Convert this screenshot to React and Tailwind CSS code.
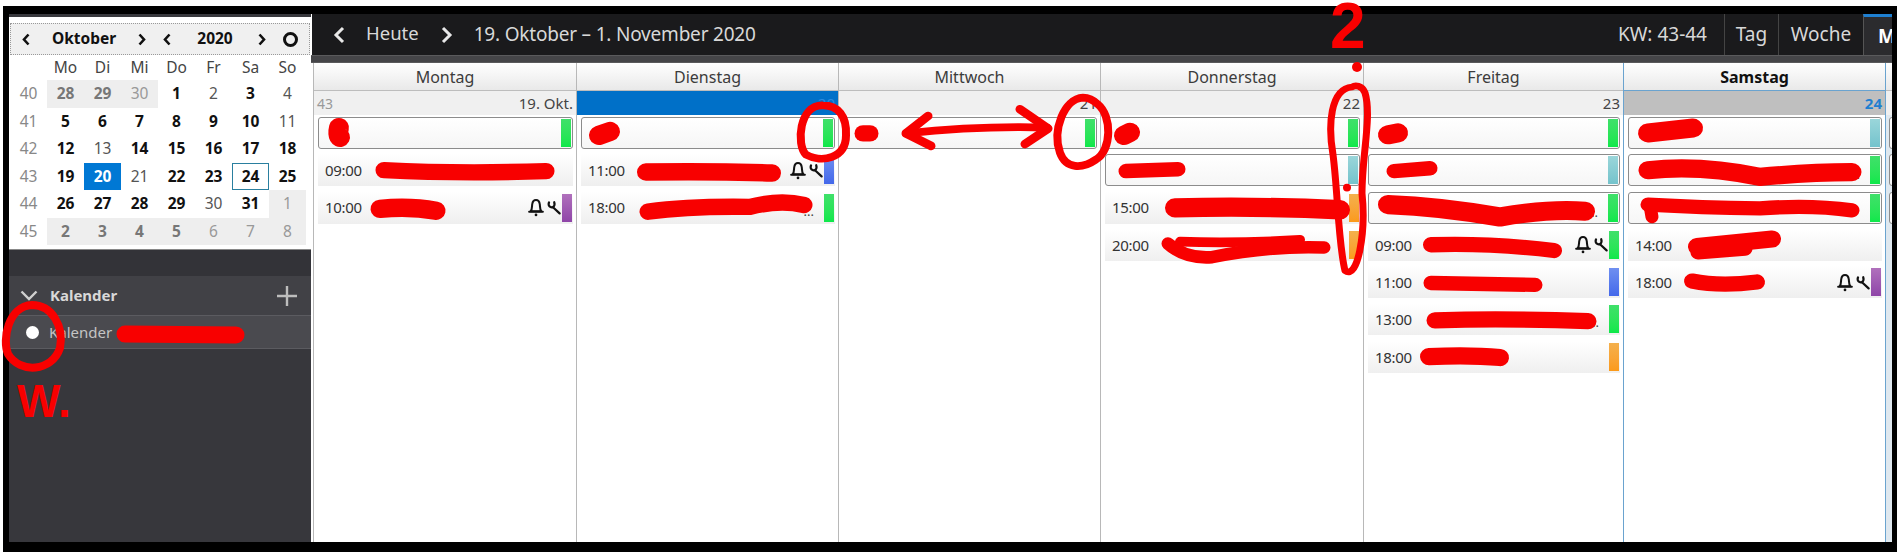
import React from "react";

const weeks = [
  [40, [["28",1,1],["29",1,1],["30",0,1],["1",1,0],["2",0,0],["3",1,0],["4",0,0]]],
  [41, [["5",1,0],["6",1,0],["7",1,0],["8",1,0],["9",1,0],["10",1,0],["11",0,0]]],
  [42, [["12",1,0],["13",0,0],["14",1,0],["15",1,0],["16",1,0],["17",1,0],["18",1,0]]],
  [43, [["19",1,0],["20",1,0],["21",0,0],["22",1,0],["23",1,0],["24",1,0],["25",1,0]]],
  [44, [["26",1,0],["27",1,0],["28",1,0],["29",1,0],["30",0,0],["31",1,0],["1",0,1]]],
  [45, [["2",1,1],["3",1,1],["4",1,1],["5",1,1],["6",0,1],["7",0,1],["8",0,1]]],
];

function Bell() {
  return (
    <svg width="16" height="19" viewBox="0 0 15 18" fill="none" stroke="#111" strokeWidth="1.9">
      <path d="M2.5 12.5 C4 10.5 3.6 8 3.9 6 C4.3 3.2 5.8 2 7.5 2 C9.2 2 10.7 3.2 11.1 6 C11.4 8 11 10.5 12.5 12.5 Z" strokeLinejoin="round" />
      <path d="M1 13 H14" strokeLinecap="round" />
      <circle cx="7.5" cy="16" r="1.3" fill="#111" stroke="none" />
    </svg>
  );
}

function Wrench() {
  return (
    <svg width="14" height="15" viewBox="0 0 14 15" fill="none" stroke="#111" strokeLinecap="round" strokeLinejoin="round">
      <path d="M2 2.5 C0.8 5.5 3 8 6 7.2 L12.6 13.4" strokeWidth="2.2" />
      <path d="M6 7.2 C7.6 6 8 4.5 7.2 2.2" strokeWidth="2.2" />
    </svg>
  );
}

function Chev({ dir, className = "" }) {
  return (
    <svg width="8" height="13" viewBox="0 0 8 13" fill="none" stroke="#111" strokeWidth="2.6" className={className}>
      <path d={dir === "l" ? "M6.5 1.5 L2 6.5 L6.5 11.5" : "M1.5 1.5 L6 6.5 L1.5 11.5"} />
    </svg>
  );
}

const bars = {
  green: "bg-gradient-to-b from-[#3fe06a] to-[#0ce84a]",
  teal: "bg-gradient-to-b from-[#9ad6da] to-[#74c3cc]",
  blue: "bg-gradient-to-b from-[#6f8ff0] to-[#4468ea]",
  purple: "bg-gradient-to-b from-[#b070bc] to-[#8f45a8]",
  orange: "bg-gradient-to-b from-[#f4b04c] to-[#fb9a1a]",
};

function AllDay({ color, dots }) {
  return (
    <div className="h-[32px] flex items-stretch justify-end rounded-[3px] border border-[#8c8c8c] bg-gradient-to-b from-white to-[#f6f6f6] p-px text-[13px] text-[#444]">
      {dots && <span className="self-end pr-[10px] pb-[3px] leading-none">...</span>}
      {color && <div className={`w-[10px] ${bars[color]}`} />}
    </div>
  );
}

function Timed({ time, color, icons, dots }) {
  return (
    <div className="h-[32px] flex items-center bg-gradient-to-b from-white to-[#efefef] pl-[7px] pr-px text-[#333]">
      <span className="text-[15px] tracking-[-0.3px]">{time}</span>
      <div className="flex-1" />
      {dots && <span className="self-end pr-[10px] pb-[6px] leading-none text-[13px] text-[#444]">...</span>}
      {icons && (
        <div className="flex items-center gap-[3px] pr-px">
          <Bell />
          <Wrench />
        </div>
      )}
      {color ? <div className={`w-[10px] h-[28px] ${bars[color]}`} /> : null}
    </div>
  );
}

const columns = [
  { name: "Montag", w: "w-[263px]", date: "19. Okt.", week: "43", events: [["a","green"],["t","09:00"],["t","10:00","purple",true]] },
  { name: "Dienstag", w: "w-[262px]", date: "20", today: true, events: [["a","green"],["t","11:00","blue",true],["t","18:00","green",false,true]] },
  { name: "Mittwoch", w: "w-[262px]", date: "21", events: [["a","green"]] },
  { name: "Donnerstag", w: "w-[263px]", date: "22", events: [["a","green"],["a","teal"],["t","15:00","orange"],["t","20:00","orange"]] },
  { name: "Freitag", w: "w-[260px]", date: "23", events: [["a","green"],["a","teal"],["a","green",false,true],["t","09:00","green",true],["t","11:00","blue"],["t","13:00","green",false,true],["t","18:00","orange"]] },
  { name: "Samstag", w: "w-[262px]", date: "24", sat: true, events: [["a","teal"],["a","green",false,true],["a","green"],["t","14:00"],["t","18:00","purple",true]] },
];

function Column({ c }) {
  return (
    <div className={`${c.w} shrink-0 flex flex-col border-l ${c.sat ? "border-[#6aa3cf]" : "border-[#b8b8b8]"}`}>
      <div className={`h-[28px] shrink-0 flex items-center justify-center border-b bg-gradient-to-b from-white to-[#e9e9e9] text-[16px] ${c.sat ? "border-[#6aa3cf] font-bold text-[#111]" : "border-[#bdbdbd] text-[#3c3c3c]"}`}>
        {c.name}
      </div>
      <div className={`h-[24px] shrink-0 flex items-center justify-between pl-[3px] pr-[3px] text-[15px] ${c.today ? "bg-[#0070c8] text-[#2a8ae0]" : c.sat ? "bg-[#bfbfbf] text-[#1f7fd0] font-bold" : "bg-[#f0f0f0] text-[#444]"}`}>
        <span className="text-[#999] text-[14px]">{c.week || ""}</span>
        <span>{c.date}</span>
      </div>
      <div className="flex flex-col gap-[5.3px] pt-[2px] pl-[4px] pr-[3px]">
        {c.events.map((e, i) =>
          e[0] === "a" ? <AllDay key={i} color={e[1]} dots={e[3]} /> : <Timed key={i} time={e[1]} color={e[2]} icons={e[3]} dots={e[4]} />
        )}
      </div>
    </div>
  );
}

const blobsA = [
  ["M339 132 C338 136 338 141 340 142", 20],
  ["M599 140 L610 136", 20],
  ["M384 176 Q460 180 546 177", 17],
  ["M380 216 Q410 213 436 218", 19],
  ["M646 178 Q710 177 772 179", 18],
  ["M648 219 Q690 213 750 214 Q780 206 804 212", 17],
  ["M863 138 L870 138", 17],
  ["M1124 140 L1130 137", 20],
  ["M1126 177 L1178 175", 15],
  ["M1175 215 Q1260 213 1340 217", 20],
  ["M1168 252 Q1185 268 1212 266 Q1270 254 1324 256", 13],
  ["M1180 250 Q1240 252 1300 248", 10],
];

const blobsB = [
  ["M1388 141 L1398 139", 20],
  ["M1394 179 L1430 176", 15],
  ["M1388 214 Q1440 216 1500 227 Q1550 218 1585 221", 20],
  ["M1431 256 Q1490 254 1554 262", 16],
  ["M1431 296 L1535 298", 15],
  ["M1435 335 Q1510 333 1588 336", 17],
  ["M1429 373 Q1470 371 1500 374", 18],
  ["M1648 139 L1693 134", 20],
  ["M1648 178 Q1700 172 1760 185 Q1810 180 1852 180", 19],
  ["M1648 214 Q1700 217 1760 218 Q1810 214 1852 220", 15],
  ["M1650 215 L1652 227", 13],
  ["M1697 258 Q1735 254 1772 250", 18],
  ["M1698 264 L1745 260", 15],
  ["M1692 294 Q1720 300 1757 295", 16],
];

const linesA = [
  ["M906 138 Q980 130 1047 132", 8],
  ["M928 120 L906 138 L931 151", 9],
  ["M1020 113 L1048 133 L1025 149", 9],
  ["M823 109 C799 108 796 150 806 160 C822 169 846 164 846 140 C847 120 838 109 823 109 Z", 8],
  ["M1083 101 C1064 102 1052 135 1060 158 C1066 175 1082 175 1096 165 C1112 155 1112 120 1098 108 C1092 102 1087 101 1083 101 Z", 8],
  ["M1352 90 C1330 92 1328 130 1333 160 C1338 200 1338 250 1345 280 C1358 290 1366 240 1362 200 C1362 160 1372 120 1365 96 C1362 88 1355 88 1352 90 Z", 7],
];

function Scribbles() {
  return (
    <svg className="absolute left-0 top-0 pointer-events-none" width="1897" height="552" fill="none" stroke="#f80000" strokeLinecap="round" strokeLinejoin="round">
      <g transform="scale(1 0.9667)">
        {blobsA.map(([d, w], i) => <path key={i} d={d} strokeWidth={w} />)}
        {linesA.map(([d, w], i) => <path key={i} d={d} strokeWidth={w} />)}
        <circle cx="1347" cy="194" r="4" fill="#f80000" stroke="none" />
      </g>
      <g transform="scale(1 0.956)">
        {blobsB.map(([d, w], i) => <path key={i} d={d} strokeWidth={w} />)}
      </g>
      <path d="M125 334 L236 335" strokeWidth="17" />
      <path d="M32 305 C8 306 2 340 8 354 C20 374 52 372 60 348 C64 326 52 305 32 305 Z" strokeWidth="8" />
      <circle cx="1357" cy="67" r="5" fill="#f80000" stroke="none" />
    </svg>
  );
}

export default function App() {
  return (
    <div className="relative w-[1897px] h-[552px] bg-white overflow-hidden font-['Noto_Sans','Open_Sans',sans-serif]">
      <div className="ml-[3px] mt-[6px] h-[546px] bg-black flex pl-[6px] pt-[8px] pb-[10px] pr-[5px]">
        <aside className="w-[302px] shrink-0 flex flex-col bg-[#37373c] pt-[3px]">
          <div className="h-[233px] bg-white px-px pt-[6px] border-b border-[#888]">
            <div className="h-[32px] flex items-center bg-[#f0f0f0] border border-dotted border-[#999] text-[#111] text-[15.5px] font-bold">
              <Chev dir="l" className="ml-[11px]" />
              <span className="w-[64px] ml-[22px] text-center">Oktober</span>
              <Chev dir="r" className="ml-[22px]" />
              <Chev dir="l" className="ml-[17px]" />
              <span className="w-[42px] ml-[23px] text-center">2020</span>
              <Chev dir="r" className="ml-[22px]" />
              <span className="ml-[17px] w-[15px] h-[15px] rounded-full border-[3px] border-[#111]" />
            </div>
            <div className="grid grid-cols-[37px_repeat(7,37px)] text-[15.5px] text-[#444] leading-none">
              <div className="h-[25px]" />
              {["Mo","Di","Mi","Do","Fr","Sa","So"].map((d) => (
                <div key={d} className="h-[25px] flex items-center justify-center">{d}</div>
              ))}
              {weeks.map(([wk, days]) => (
                <React.Fragment key={wk}>
                  <div className="h-[27.5px] flex items-center justify-center text-[#888]">{wk}</div>
                  {days.map(([d, bold, other], i) => {
                    const isToday = wk === 43 && d === "20";
                    const isSel = wk === 43 && d === "24";
                    const cls = isToday
                      ? "bg-[#0078d4] text-white font-bold"
                      : isSel
                      ? "border border-[#2a7f9f] text-[#111] font-bold"
                      : other
                      ? `bg-[#eeeeee] ${bold ? "font-bold text-[#777]" : "text-[#999]"}`
                      : bold
                      ? "font-bold text-[#111]"
                      : "text-[#555]";
                    return (
                      <div key={i} className={`h-[27.5px] flex items-center justify-center ${cls}`}>{d}</div>
                    );
                  })}
                </React.Fragment>
              ))}
            </div>
          </div>
          <div className="h-[26px] shrink-0 bg-[#333338]" />
          <div className="h-[39px] shrink-0 flex items-center bg-[#414146] pl-[11px] pr-[14px] text-[#d8d8d8] text-[15px] font-bold">
            <svg width="18" height="11" viewBox="0 0 18 11" fill="none" stroke="#d0d0d0" strokeWidth="2.4" className="mr-[12px]"><path d="M1.5 1.5 L9 9 L16.5 1.5" /></svg>
            <span className="flex-1">Kalender</span>
            <svg width="20" height="20" viewBox="0 0 20 20" stroke="#bdbdbd" strokeWidth="2.4"><path d="M10 0 V20 M0 10 H20" /></svg>
          </div>
          <div className="h-[34px] shrink-0 flex items-center bg-[#4a4a4f] border-y border-[#5b5b60] pl-[17px] text-[#c4c4c4] text-[15px]">
            <span className="w-[13px] h-[13px] rounded-full bg-white mr-[10px]" />
            <span>Kalender</span>
          </div>
        </aside>

        <main className="flex-1 min-w-0 flex flex-col overflow-hidden bg-white">
          <div className="h-[41px] shrink-0 flex items-stretch bg-[#1a1a1c] text-[#d8d8d8] text-[19px] ml-px">
            <div className="flex items-center pl-[21px] flex-1">
              <svg width="12" height="18" viewBox="0 0 12 18" fill="none" stroke="#e8e8e8" strokeWidth="3"><path d="M10 2 L3 9 L10 16" /></svg>
              <span className="ml-[21px] -mt-[3px] text-[18.5px]">Heute</span>
              <svg width="12" height="18" viewBox="0 0 12 18" fill="none" stroke="#e8e8e8" strokeWidth="3" className="ml-[22px]"><path d="M2 2 L9 9 L2 16" /></svg>
              <span className="ml-[21px] tracking-[-0.2px]">19. Oktober – 1. November 2020</span>
            </div>
            <div className="flex items-center pr-[17px]">KW: 43-44</div>
            <div className="flex items-center justify-center w-[54px] border-l border-[#444]">Tag</div>
            <div className="flex items-center justify-center w-[85px] border-l border-[#444]">Woche</div>
            <div className="w-[29px] flex items-center pl-[14px] bg-[#2b2b2e] border-t-[3px] border-[#1e7fd0] border-l border-l-[#555] text-white font-bold overflow-hidden">M</div>
          </div>
          <div className="h-[8px] shrink-0 bg-[#454548] border-y border-[#5a5a5c]" />
          <div className="flex-1 flex pl-[2px] bg-white min-h-0">
            {columns.map((c) => <Column key={c.name} c={c} />)}
            <div className="w-[262px] shrink-0 flex flex-col border-l border-[#6aa3cf] bg-[#dfe8ef]">
              <div className="h-[28px] shrink-0 border-b border-[#bdbdbd] bg-gradient-to-b from-white to-[#e9e9e9]" />
              <div className="h-[24px] shrink-0 bg-[#f0f0f0]" />
              <div className="flex flex-col gap-[5.3px] pt-[2px] pl-[3px]">
                <AllDay /><AllDay /><AllDay />
              </div>
            </div>
          </div>
        </main>
      </div>
      <Scribbles />
      <span className="absolute left-[17px] top-[378px] text-[#f80000] text-[46px] font-bold leading-none font-['Liberation_Sans',sans-serif]">W.</span>
      <span className="absolute left-[1330px] top-0 text-[#f80000] text-[64px] font-bold leading-[52px] font-['Liberation_Sans',sans-serif]">2</span>
    </div>
  );
}
